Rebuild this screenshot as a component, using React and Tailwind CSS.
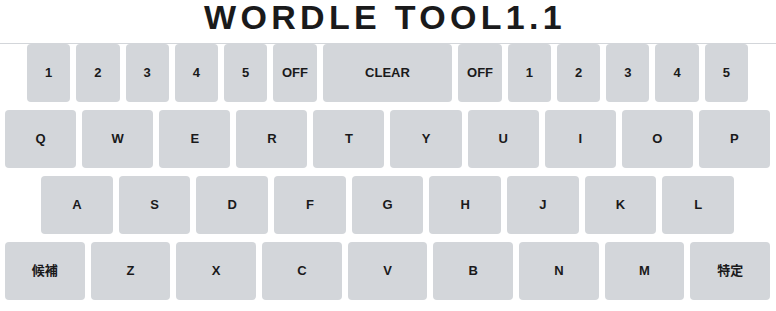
import React from "react";

const font = { fontFamily: '"Liberation Sans", "Noto Sans CJK JP", Arial, sans-serif' };

function Key({ label, wide }) {
  return (
    <button
      className={`${wide ? "flex-[3]" : "flex-1"} h-full min-w-0 rounded-[4px] bg-[#d3d6da] text-[13px] font-bold text-[#1a1a1b] flex items-center justify-center`}
    >
      {label}
    </button>
  );
}

export default function App() {
  const row1 = ["1", "2", "3", "4", "5", "OFF", "CLEAR", "OFF", "1", "2", "3", "4", "5"];
  const row2 = ["Q", "W", "E", "R", "T", "Y", "U", "I", "O", "P"];
  const row3 = ["A", "S", "D", "F", "G", "H", "J", "K", "L"];
  const row4 = ["候補", "Z", "X", "C", "V", "B", "N", "M", "特定"];
  return (
    <div className="w-[776px] h-[311px] bg-white" style={font}>
      <div className="h-[44px] border-b border-[#d3d6da] flex justify-center">
        <h1 className="text-[34px] leading-none font-bold tracking-[4.3px] text-[#1a1a1b] pr-[6px]">
          WORDLE TOOL1.1
        </h1>
      </div>
      <div className="ml-[5px] w-[765px] flex flex-col gap-[8px]">
        <div className="h-[58px] flex gap-[6px] px-[22px]">
          {row1.map((k, i) => (
            <Key key={i} label={k} wide={k === "CLEAR"} />
          ))}
        </div>
        <div className="h-[58px] flex gap-[6px]">
          {row2.map((k, i) => (
            <Key key={i} label={k} />
          ))}
        </div>
        <div className="h-[58px] flex gap-[6px] px-[36px]">
          {row3.map((k, i) => (
            <Key key={i} label={k} />
          ))}
        </div>
        <div className="h-[58px] flex gap-[6px]">
          {row4.map((k, i) => (
            <Key key={i} label={k} />
          ))}
        </div>
      </div>
    </div>
  );
}
